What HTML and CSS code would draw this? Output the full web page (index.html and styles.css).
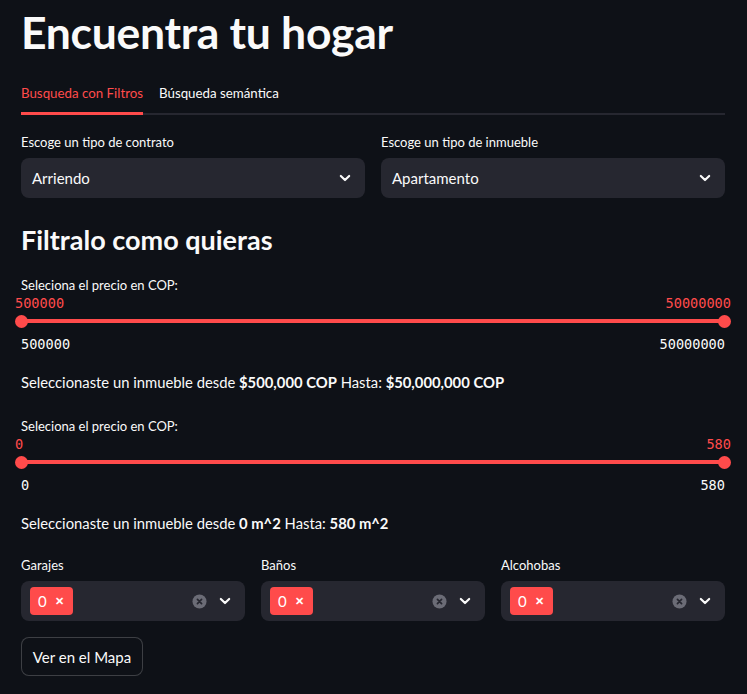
FILE: index.html
```html
<!DOCTYPE html>
<html lang="es">
<head>
<meta charset="utf-8">
<link rel="stylesheet" href="styles.css">
</head>
<body>
<main class="main">
  <h1 class="title">Encuentra tu hogar</h1>
  <div class="tabs">
    <div class="tab tab-active">Busqueda con Filtros</div>
    <div class="tab">Búsqueda semántica</div>
  </div>
  <div class="cols cols-2">
    <div class="field">
      <label class="label">Escoge un tipo de contrato</label>
      <div class="select"><span>Arriendo</span>
        <svg class="chev" viewBox="0 0 24 24"><path d="M7 9.5l5 5 5-5" fill="none" stroke="currentColor" stroke-width="2.6" stroke-linecap="round" stroke-linejoin="round"/></svg>
      </div>
    </div>
    <div class="field">
      <label class="label">Escoge un tipo de inmueble</label>
      <div class="select"><span>Apartamento</span>
        <svg class="chev" viewBox="0 0 24 24"><path d="M7 9.5l5 5 5-5" fill="none" stroke="currentColor" stroke-width="2.6" stroke-linecap="round" stroke-linejoin="round"/></svg>
      </div>
    </div>
  </div>
  <h2 class="subtitle">Filtralo como quieras</h2>

  <div class="slider-block">
    <label class="label">Seleciona el precio en COP:</label>
    <div class="slider">
      <div class="vals"><span>500000</span><span>50000000</span></div>
      <div class="track"><span class="thumb"></span><span class="thumb"></span></div>
      <div class="ticks"><span>500000</span><span>50000000</span></div>
    </div>
  </div>
  <p class="text">Seleccionaste un inmueble desde <b>$500,000 COP</b> Hasta: <b>$50,000,000 COP</b></p>

  <div class="slider-block">
    <label class="label">Seleciona el precio en COP:</label>
    <div class="slider">
      <div class="vals"><span>0</span><span>580</span></div>
      <div class="track"><span class="thumb"></span><span class="thumb"></span></div>
      <div class="ticks"><span>0</span><span>580</span></div>
    </div>
  </div>
  <p class="text">Seleccionaste un inmueble desde <b>0 m^2</b> Hasta: <b>580 m^2</b></p>

  <div class="cols cols-3">
    <div class="field">
      <label class="label">Garajes</label>
      <div class="multi">
        <span class="tag">0 <span class="x">✕</span></span>
        <span class="icons">
          <svg class="clear" viewBox="0 0 16 16"><circle cx="8" cy="8" r="7.5" fill="#6b6c76"/><path d="M5.8 5.8l4.4 4.4M10.2 5.8l-4.4 4.4" stroke="#262730" stroke-width="1.8" stroke-linecap="round"/></svg>
          <svg class="chev" viewBox="0 0 24 24"><path d="M7 9.5l5 5 5-5" fill="none" stroke="currentColor" stroke-width="2.6" stroke-linecap="round" stroke-linejoin="round"/></svg>
        </span>
      </div>
    </div>
    <div class="field">
      <label class="label">Baños</label>
      <div class="multi">
        <span class="tag">0 <span class="x">✕</span></span>
        <span class="icons">
          <svg class="clear" viewBox="0 0 16 16"><circle cx="8" cy="8" r="7.5" fill="#6b6c76"/><path d="M5.8 5.8l4.4 4.4M10.2 5.8l-4.4 4.4" stroke="#262730" stroke-width="1.8" stroke-linecap="round"/></svg>
          <svg class="chev" viewBox="0 0 24 24"><path d="M7 9.5l5 5 5-5" fill="none" stroke="currentColor" stroke-width="2.6" stroke-linecap="round" stroke-linejoin="round"/></svg>
        </span>
      </div>
    </div>
    <div class="field">
      <label class="label">Alcohobas</label>
      <div class="multi">
        <span class="tag">0 <span class="x">✕</span></span>
        <span class="icons">
          <svg class="clear" viewBox="0 0 16 16"><circle cx="8" cy="8" r="7.5" fill="#6b6c76"/><path d="M5.8 5.8l4.4 4.4M10.2 5.8l-4.4 4.4" stroke="#262730" stroke-width="1.8" stroke-linecap="round"/></svg>
          <svg class="chev" viewBox="0 0 24 24"><path d="M7 9.5l5 5 5-5" fill="none" stroke="currentColor" stroke-width="2.6" stroke-linecap="round" stroke-linejoin="round"/></svg>
        </span>
      </div>
    </div>
  </div>
  <button class="btn">Ver en el Mapa</button>
</main>
</body>
</html>
```
FILE: styles.css
```css
* { box-sizing: border-box; }
html, body { margin: 0; padding: 0; }
body {
  background: #0e1117;
  color: #fafafa;
  font-family: Lato, "Noto Sans", sans-serif;
  font-size: 15px;
  overflow: hidden;
}
.main {
  width: 747px;
  padding: 0 22px 0 21px;
}
.title {
  margin: 0;
  padding-top: 6px;
  font-size: 44.5px;
  line-height: 52px;
  font-weight: 700;
  letter-spacing: -0.3px;
}
.tabs {
  display: flex;
  gap: 16px;
  margin-top: 15px;
  border-bottom: 2px solid #262730;
}
.tab {
  font-size: 13.3px;
  line-height: 20px;
  padding: 10px 0 9px;
  margin-bottom: -2px;
  border-bottom: 3px solid transparent;
}
.tab-active {
  color: #ff4b4b;
  border-bottom-color: #ff4b4b;
}
.cols { display: grid; gap: 16px; }
.cols-2 { grid-template-columns: 1fr 1fr; margin-top: 17px; }
.cols-3 { grid-template-columns: 1fr 1fr 1fr; margin-top: 20px; }
.field { display: flex; flex-direction: column; }
.label {
  font-size: 13px;
  line-height: 20px;
  margin-bottom: 6px;
}
.select, .multi {
  height: 40px;
  background: #262730;
  border-radius: 8px;
  display: flex;
  align-items: center;
  justify-content: space-between;
  padding: 0 10px 0 11px;
  font-size: 15px;
}
.chev { width: 20px; height: 20px; color: #fafafa; }
.subtitle {
  margin: 24px 0 0;
  font-size: 27px;
  line-height: 36px;
  font-weight: 700;
}
.slider-block { margin-top: 17px; }
.text + .slider-block { margin-top: 22px; }
.slider-block .label { margin-bottom: 0; }
.slider { position: relative; }
.vals, .ticks {
  display: flex;
  justify-content: space-between;
  font-family: "DejaVu Sans Mono", "Liberation Mono", monospace;
  font-size: 13.6px;
  line-height: 18px;
}
.vals { color: #ff4b4b; margin: -1px -6px 0; }
.track {
  height: 4px;
  background: #ff4b4b;
  border-radius: 2px;
  margin: 7px 0 12px;
  display: flex;
  justify-content: space-between;
  align-items: center;
}
.thumb {
  width: 13px; height: 13px;
  border-radius: 50%;
  background: #ff4b4b;
  margin: 0 -6px;
}
.ticks { color: #fafafa; }
.text {
  margin: 17px 0 0;
  font-size: 14.8px;
  line-height: 24px;
}
.text b { font-weight: 700; }
.multi { padding-left: 9px; }
.tag {
  background: #ff4b4b;
  color: #fff;
  height: 28px;
  padding: 0 9px 0 8px;
  border-radius: 4px;
  display: flex;
  align-items: center;
  gap: 8px;
  font-size: 15px;
}
.tag .x { font-size: 11px; font-weight: 700; }
.icons { display: flex; align-items: center; gap: 8px; }
.clear { width: 15px; height: 15px; }
.btn {
  margin-top: 16px;
  background: #0e1117;
  color: #fafafa;
  border: 1px solid rgba(250,250,250,0.2);
  border-radius: 8px;
  height: 39px;
  width: 122px;
  padding: 0;
  font-family: inherit;
  font-size: 15px;
}
```
